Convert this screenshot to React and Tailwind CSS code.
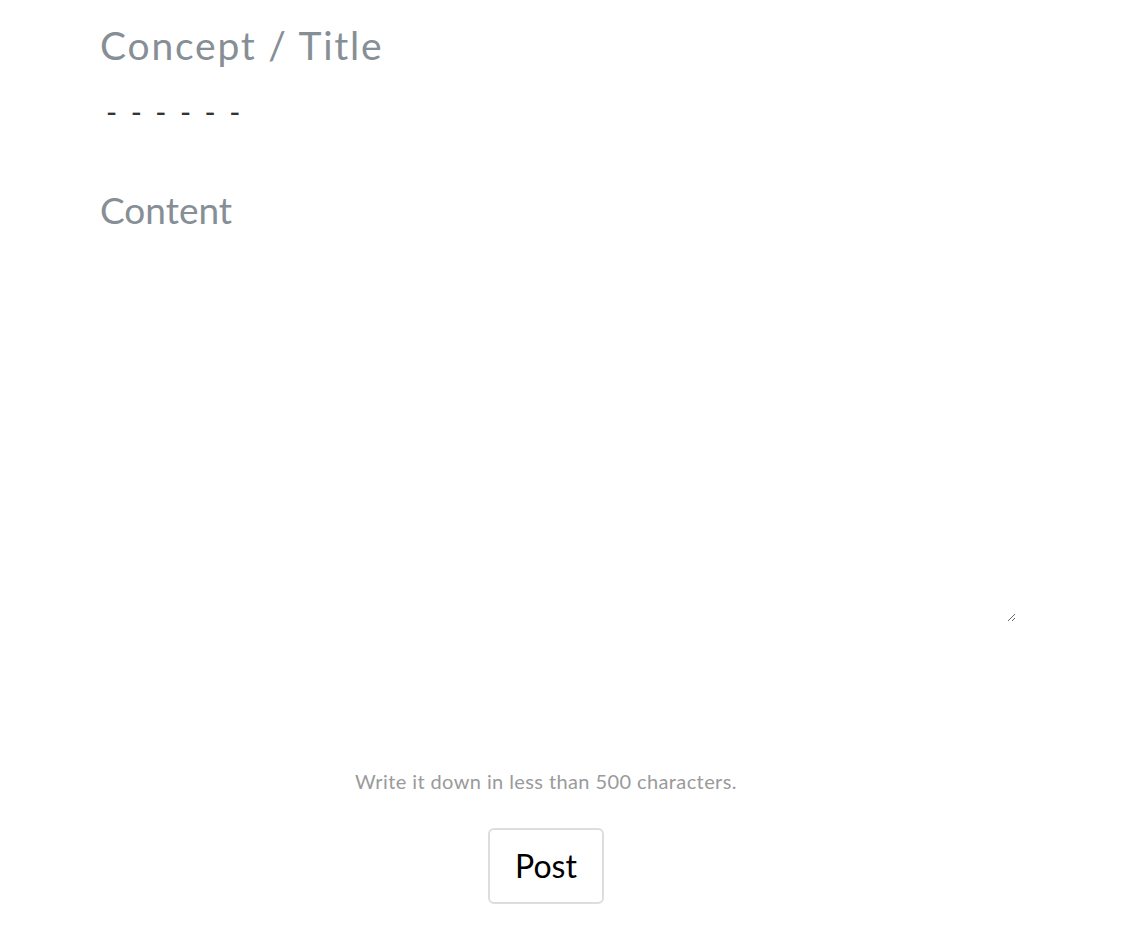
export default function App() {
  return (
    <div className="w-[1128px] h-[944px] bg-white" style={{ fontFamily: "Lato, 'Open Sans', sans-serif" }}>
      <div className="ml-[76px] w-[940px] flex flex-col">
        <input
          className="mt-[21px] pl-6 h-[48px] text-[39px] tracking-[1.8px] font-normal text-[#868e96] placeholder:text-[#868e96] outline-none bg-transparent"
          placeholder="Concept / Title"
        />
        <div className="pl-[30px] mt-[27px] text-[30px] leading-[30px] text-[#333] tracking-[2.9px]">- - - - - -</div>
        <div className="relative mt-[56px] h-[440px]">
          <textarea
            className="w-full h-full resize pl-6 pt-0 text-[37px] font-normal text-[#868e96] placeholder:text-[#868e96] outline-none bg-transparent"
            placeholder="Content"
          />
        </div>
        <p className="mt-[144px] text-center text-[20px] tracking-[0.4px] text-[#9a9a9a]">Write it down in less than 500 characters.</p>
        <div className="flex justify-center mt-[32px]">
          <button className="w-[116px] h-[76px] border-2 border-[#ddd] rounded-md text-[32px] text-black bg-white">Post</button>
        </div>
      </div>
    </div>
  );
}
